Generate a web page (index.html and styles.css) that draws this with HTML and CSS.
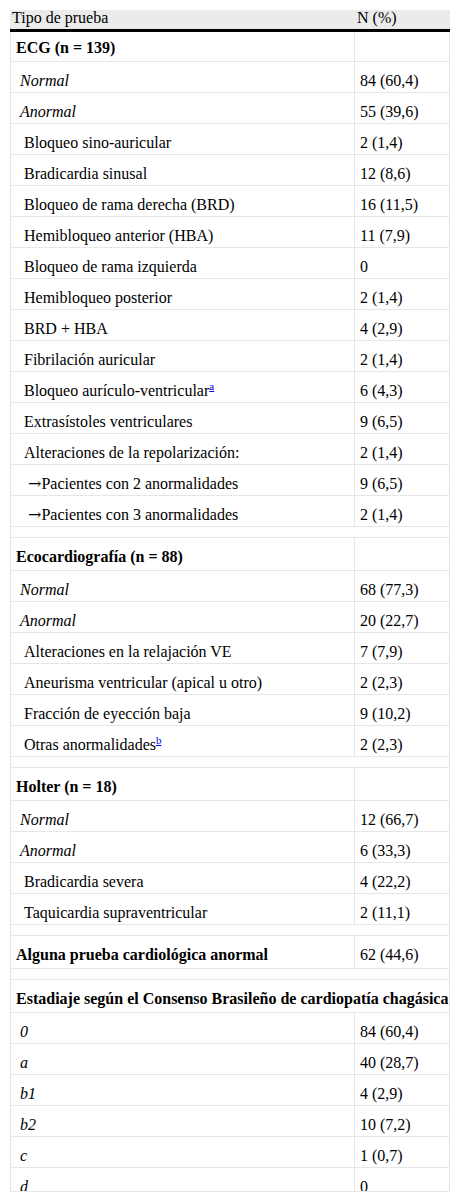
FILE: index.html
```html
<!DOCTYPE html>
<html lang="es">
<head>
<meta charset="utf-8">
<title>Tabla</title>
<link rel="stylesheet" href="styles.css">
</head>
<body>
<div class="wrap">
<table class="tbl">
<thead>
<tr><th class="c1">Tipo de prueba</th><th class="c2">N (%)</th></tr>
</thead>
<tbody>
<tr class="grp first"><td class="c1"><b>ECG (n = 139)</b></td><td class="c2"></td></tr>
<tr><td class="c1 i1"><i>Normal</i></td><td class="c2">84 (60,4)</td></tr>
<tr><td class="c1 i1"><i>Anormal</i></td><td class="c2">55 (39,6)</td></tr>
<tr><td class="c1 i2">Bloqueo sino-auricular</td><td class="c2">2 (1,4)</td></tr>
<tr><td class="c1 i2">Bradicardia sinusal</td><td class="c2">12 (8,6)</td></tr>
<tr><td class="c1 i2">Bloqueo de rama derecha (BRD)</td><td class="c2">16 (11,5)</td></tr>
<tr><td class="c1 i2">Hemibloqueo anterior (HBA)</td><td class="c2">11 (7,9)</td></tr>
<tr><td class="c1 i2">Bloqueo de rama izquierda</td><td class="c2">0</td></tr>
<tr><td class="c1 i2">Hemibloqueo posterior</td><td class="c2">2 (1,4)</td></tr>
<tr><td class="c1 i2">BRD + HBA</td><td class="c2">4 (2,9)</td></tr>
<tr><td class="c1 i2">Fibrilación auricular</td><td class="c2">2 (1,4)</td></tr>
<tr><td class="c1 i2">Bloqueo aurículo-ventricular<sup><a class="fn" href="#">a</a></sup></td><td class="c2">6 (4,3)</td></tr>
<tr><td class="c1 i2">Extrasístoles ventriculares</td><td class="c2">9 (6,5)</td></tr>
<tr><td class="c1 i2">Alteraciones de la repolarización:</td><td class="c2">2 (1,4)</td></tr>
<tr><td class="c1 i3"><span class="arr">→</span>Pacientes con 2 anormalidades</td><td class="c2">9 (6,5)</td></tr>
<tr><td class="c1 i3"><span class="arr">→</span>Pacientes con 3 anormalidades</td><td class="c2">2 (1,4)</td></tr>
<tr class="sp"><td class="c1" colspan="2"></td></tr>
<tr class="grp"><td class="c1"><b>Ecocardiografía (n = 88)</b></td><td class="c2"></td></tr>
<tr><td class="c1 i1"><i>Normal</i></td><td class="c2">68 (77,3)</td></tr>
<tr><td class="c1 i1"><i>Anormal</i></td><td class="c2">20 (22,7)</td></tr>
<tr><td class="c1 i2">Alteraciones en la relajación VE</td><td class="c2">7 (7,9)</td></tr>
<tr><td class="c1 i2">Aneurisma ventricular (apical u otro)</td><td class="c2">2 (2,3)</td></tr>
<tr><td class="c1 i2">Fracción de eyección baja</td><td class="c2">9 (10,2)</td></tr>
<tr><td class="c1 i2">Otras anormalidades<sup><a class="fn" href="#">b</a></sup></td><td class="c2">2 (2,3)</td></tr>
<tr class="sp"><td class="c1" colspan="2"></td></tr>
<tr class="grp"><td class="c1"><b>Holter (n = 18)</b></td><td class="c2"></td></tr>
<tr><td class="c1 i1"><i>Normal</i></td><td class="c2">12 (66,7)</td></tr>
<tr><td class="c1 i1"><i>Anormal</i></td><td class="c2">6 (33,3)</td></tr>
<tr><td class="c1 i2">Bradicardia severa</td><td class="c2">4 (22,2)</td></tr>
<tr><td class="c1 i2">Taquicardia supraventricular</td><td class="c2">2 (11,1)</td></tr>
<tr class="sp"><td class="c1" colspan="2"></td></tr>
<tr class="grp"><td class="c1"><b>Alguna prueba cardiológica anormal</b></td><td class="c2">62 (44,6)</td></tr>
<tr class="sp"><td class="c1" colspan="2"></td></tr>
<tr class="grp"><td class="c1 wide" colspan="2"><b>Estadiaje según el Consenso Brasileño de cardiopatía chagásica</b></td></tr>
<tr><td class="c1 i1"><i>0</i></td><td class="c2">84 (60,4)</td></tr>
<tr><td class="c1 i1"><i>a</i></td><td class="c2">40 (28,7)</td></tr>
<tr><td class="c1 i1"><i>b1</i></td><td class="c2">4 (2,9)</td></tr>
<tr><td class="c1 i1"><i>b2</i></td><td class="c2">10 (7,2)</td></tr>
<tr><td class="c1 i1"><i>c</i></td><td class="c2">1 (0,7)</td></tr>
<tr><td class="c1 i1"><i>d</i></td><td class="c2">0</td></tr>
</tbody>
</table>
</div>
</body>
</html>
```
FILE: styles.css
```css
html, body {
  margin: 0;
  padding: 0;
  background: #ffffff;
}
body {
  font-family: "Liberation Serif", "Times New Roman", serif;
  font-size: 16px;
  color: #000000;
}
.wrap {
  margin: 10px 0 0 10px;
  width: 440px;
  height: 1181px;
  overflow: hidden;
  border-bottom: 1px solid #e6e6e6;
}
.tbl {
  width: 440px;
  border-collapse: separate;
  border-spacing: 0;
  table-layout: fixed;
}
.tbl th {
  background: #ebebeb;
  font-weight: normal;
  text-align: left;
  height: 22px;
  padding: 0 2px;
  line-height: 16px;
  vertical-align: top;
  border-bottom: 3px solid #000000;
  box-sizing: border-box;
}
.tbl th.c1 {
  width: 345px;
}
.tbl td {
  box-sizing: border-box;
  height: 31px;
  padding: 9px 5px 0 5px;
  line-height: 20px;
  vertical-align: top;
  border-right: 1px solid #e6e6e6;
  border-bottom: 1px solid #e6e6e6;
  white-space: nowrap;
}
.tbl td.c1 {
  border-left: 1px solid #e6e6e6;
}
.tbl tr.grp td {
  height: 33px;
  padding-top: 9px;
}
.tbl tr.grp.first td {
  height: 30px;
  padding-top: 6px;
}
.tbl tr.sp td {
  height: 11px;
  padding: 0;
}
.tbl td.i1 { padding-left: 9px; }
.tbl td.i2 { padding-left: 13px; }
.tbl td.i3 { padding-left: 17px; }
.tbl td.wide { padding-left: 5px; }
.arr {
  font-family: "DejaVu Serif", serif;
}
.tbl sup {
  font-size: 11px;
  line-height: 0;
  vertical-align: 6px;
}
.fn {
  color: #0000ee;
  text-decoration: underline;
}
```
